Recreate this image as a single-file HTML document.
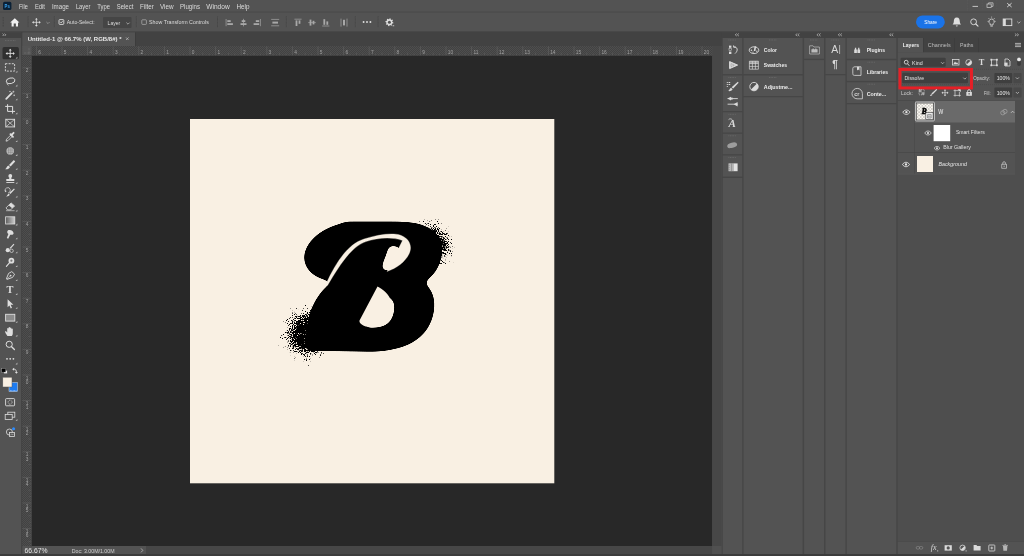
<!DOCTYPE html>
<html lang="en"><head><meta charset="utf-8"><title>Photoshop - Dissolve blend mode</title>
<style>
html,body{margin:0;padding:0;background:#535353;overflow:hidden}
svg{display:block;font-family:"Liberation Sans",sans-serif}
</style></head><body>
<svg width="1024" height="556" viewBox="0 0 1024 556">
<rect x="0" y="0" width="1024" height="556" fill="#535353" />
<rect x="0" y="11.6" width="1024" height="1.0" fill="#494949" />
<rect x="0" y="31.6" width="1024" height="0.6" fill="#3a3a3a" />
<rect x="22" y="32" width="700" height="14" fill="#424242" />
<rect x="22" y="32.4" width="113" height="13.6" fill="#535353" />
<rect x="135" y="32.4" width="0.6" height="13.6" fill="#3a3a3a" />
<rect x="22" y="46" width="690" height="9.8" fill="#484848" />
<rect x="22" y="46" width="9.6" height="500" fill="#484848" />
<rect x="32" y="55.8" width="680.3" height="490.2" fill="#282828" />
<rect x="712.3" y="46" width="9.3" height="500" fill="#474747" />
<rect x="22" y="546" width="124" height="8" fill="#535353" />
<rect x="146" y="546" width="566.3" height="8" fill="#474747" />
<rect x="712.3" y="546" width="9.3" height="8" fill="#505050" />
<rect x="0" y="554" width="1024" height="2" fill="#3c3c3c" />
<rect x="21.4" y="32" width="0.8" height="522" fill="#3a3a3a" />
<rect x="190" y="119" width="364.3" height="364.3" fill="#f9f0e3" />
<defs>
<filter id="goo" x="-20%" y="-20%" width="140%" height="140%" color-interpolation-filters="sRGB">
<feGaussianBlur in="SourceGraphic" stdDeviation="3.2" result="b"/>
<feColorMatrix in="b" type="matrix" values="0 0 0 0 0  0 0 0 0 0  0 0 0 0 0  0 0 0 14 -7"/>
</filter>
<filter id="dis" x="-40%" y="-40%" width="180%" height="180%" color-interpolation-filters="sRGB">
<feGaussianBlur in="SourceAlpha" stdDeviation="9" result="b"/>
<feTurbulence type="fractalNoise" baseFrequency="0.93" numOctaves="1" seed="7" result="n"/>
<feColorMatrix in="n" type="matrix" values="0 0 0 0 0  0 0 0 0 0  0 0 0 0 0  1 0 0 0 0" result="na"/>
<feComposite in="b" in2="na" operator="arithmetic" k1="0" k2="1.5" k3="-2.6" k4="0.45" result="d"/>
<feColorMatrix in="d" type="matrix" values="0 0 0 0 0  0 0 0 0 0  0 0 0 0 0  0 0 0 5 0" result="e"/><feColorMatrix in="b" type="matrix" values="0 0 0 0 0  0 0 0 0 0  0 0 0 0 0  0 0 0 60 -1.5" result="m"/><feComposite in="e" in2="m" operator="in"/>
</filter>
</defs>
<g filter="url(#dis)">
<ellipse cx="308" cy="334" rx="23" ry="24" transform="rotate(35 308 334)" fill="#000"/>
<ellipse cx="435" cy="243" rx="15" ry="22" transform="rotate(-28 435 243)" fill="#000"/>
</g>
<g id="art" filter="url(#goo)">
<g transform="translate(313,344.3) skewX(-7) scale(1.0,1)">
<text x="0" y="0" font-family="'Liberation Serif',serif" font-weight="700" font-style="italic" font-size="176" fill="#000" stroke="#000" stroke-width="15" stroke-linejoin="round">B</text>
</g>
<ellipse cx="346" cy="252" rx="43" ry="29" transform="rotate(-14 346 252)" fill="#000"/>
<ellipse cx="326" cy="312" rx="15" ry="33" transform="rotate(25 326 312)" fill="#000"/>
</g>
<path d="M 326 284 C 336 262, 348 244, 364 239 C 378 234.5, 392 232.5, 400 235 C 409 238, 413 246, 409 254 C 405 262, 397 268, 387 271.5 L 402.5 240.5 C 392 236.8, 378 237.6, 366 241.6 C 351 247, 340 264.5, 327.5 285.5 Z" fill="#f9f0e3" stroke="#f9f0e3" stroke-width="0.3"/>
<path d="M 377.5 286.5 L 359.5 320.5 C 358.5 324, 366 328.5, 375 326.5 C 386 324, 393 310, 391 301 C 389.5 294, 382 289, 377.5 286.5 Z" fill="#f9f0e3"/>

<pattern id="rck" width="2" height="2" patternUnits="userSpaceOnUse"><rect width="2" height="2" fill="#424242"/><rect width="1" height="1" fill="#4e4e4e"/><rect x="1" y="1" width="1" height="1" fill="#4e4e4e"/></pattern><rect x="22.2" y="46" width="690" height="9.8" fill="url(#rck)"/><rect x="22.2" y="46" width="9.4" height="500" fill="url(#rck)"/><g stroke="#686868" stroke-width="0.5"><line x1="36.40" y1="46.4" x2="36.40" y2="55.8"/><line x1="62.00" y1="46.4" x2="62.00" y2="55.8"/><line x1="87.60" y1="46.4" x2="87.60" y2="55.8"/><line x1="113.20" y1="46.4" x2="113.20" y2="55.8"/><line x1="138.80" y1="46.4" x2="138.80" y2="55.8"/><line x1="164.40" y1="46.4" x2="164.40" y2="55.8"/><line x1="190.00" y1="46.4" x2="190.00" y2="55.8"/><line x1="215.60" y1="46.4" x2="215.60" y2="55.8"/><line x1="241.20" y1="46.4" x2="241.20" y2="55.8"/><line x1="266.80" y1="46.4" x2="266.80" y2="55.8"/><line x1="292.40" y1="46.4" x2="292.40" y2="55.8"/><line x1="318.00" y1="46.4" x2="318.00" y2="55.8"/><line x1="343.60" y1="46.4" x2="343.60" y2="55.8"/><line x1="369.20" y1="46.4" x2="369.20" y2="55.8"/><line x1="394.80" y1="46.4" x2="394.80" y2="55.8"/><line x1="420.40" y1="46.4" x2="420.40" y2="55.8"/><line x1="446.00" y1="46.4" x2="446.00" y2="55.8"/><line x1="471.60" y1="46.4" x2="471.60" y2="55.8"/><line x1="497.20" y1="46.4" x2="497.20" y2="55.8"/><line x1="522.80" y1="46.4" x2="522.80" y2="55.8"/><line x1="548.40" y1="46.4" x2="548.40" y2="55.8"/><line x1="574.00" y1="46.4" x2="574.00" y2="55.8"/><line x1="599.60" y1="46.4" x2="599.60" y2="55.8"/><line x1="625.20" y1="46.4" x2="625.20" y2="55.8"/><line x1="650.80" y1="46.4" x2="650.80" y2="55.8"/><line x1="676.40" y1="46.4" x2="676.40" y2="55.8"/><line x1="702.00" y1="46.4" x2="702.00" y2="55.8"/></g><g stroke="#666" stroke-width="0.45"><line x1="33.20" y1="54.5" x2="33.20" y2="55.8"/><line x1="39.60" y1="54.5" x2="39.60" y2="55.8"/><line x1="42.80" y1="53.599999999999994" x2="42.80" y2="55.8"/><line x1="46.00" y1="54.5" x2="46.00" y2="55.8"/><line x1="49.20" y1="52.599999999999994" x2="49.20" y2="55.8"/><line x1="52.40" y1="54.5" x2="52.40" y2="55.8"/><line x1="55.60" y1="53.599999999999994" x2="55.60" y2="55.8"/><line x1="58.80" y1="54.5" x2="58.80" y2="55.8"/><line x1="65.20" y1="54.5" x2="65.20" y2="55.8"/><line x1="68.40" y1="53.599999999999994" x2="68.40" y2="55.8"/><line x1="71.60" y1="54.5" x2="71.60" y2="55.8"/><line x1="74.80" y1="52.599999999999994" x2="74.80" y2="55.8"/><line x1="78.00" y1="54.5" x2="78.00" y2="55.8"/><line x1="81.20" y1="53.599999999999994" x2="81.20" y2="55.8"/><line x1="84.40" y1="54.5" x2="84.40" y2="55.8"/><line x1="90.80" y1="54.5" x2="90.80" y2="55.8"/><line x1="94.00" y1="53.599999999999994" x2="94.00" y2="55.8"/><line x1="97.20" y1="54.5" x2="97.20" y2="55.8"/><line x1="100.40" y1="52.599999999999994" x2="100.40" y2="55.8"/><line x1="103.60" y1="54.5" x2="103.60" y2="55.8"/><line x1="106.80" y1="53.599999999999994" x2="106.80" y2="55.8"/><line x1="110.00" y1="54.5" x2="110.00" y2="55.8"/><line x1="116.40" y1="54.5" x2="116.40" y2="55.8"/><line x1="119.60" y1="53.599999999999994" x2="119.60" y2="55.8"/><line x1="122.80" y1="54.5" x2="122.80" y2="55.8"/><line x1="126.00" y1="52.599999999999994" x2="126.00" y2="55.8"/><line x1="129.20" y1="54.5" x2="129.20" y2="55.8"/><line x1="132.40" y1="53.599999999999994" x2="132.40" y2="55.8"/><line x1="135.60" y1="54.5" x2="135.60" y2="55.8"/><line x1="142.00" y1="54.5" x2="142.00" y2="55.8"/><line x1="145.20" y1="53.599999999999994" x2="145.20" y2="55.8"/><line x1="148.40" y1="54.5" x2="148.40" y2="55.8"/><line x1="151.60" y1="52.599999999999994" x2="151.60" y2="55.8"/><line x1="154.80" y1="54.5" x2="154.80" y2="55.8"/><line x1="158.00" y1="53.599999999999994" x2="158.00" y2="55.8"/><line x1="161.20" y1="54.5" x2="161.20" y2="55.8"/><line x1="167.60" y1="54.5" x2="167.60" y2="55.8"/><line x1="170.80" y1="53.599999999999994" x2="170.80" y2="55.8"/><line x1="174.00" y1="54.5" x2="174.00" y2="55.8"/><line x1="177.20" y1="52.599999999999994" x2="177.20" y2="55.8"/><line x1="180.40" y1="54.5" x2="180.40" y2="55.8"/><line x1="183.60" y1="53.599999999999994" x2="183.60" y2="55.8"/><line x1="186.80" y1="54.5" x2="186.80" y2="55.8"/><line x1="193.20" y1="54.5" x2="193.20" y2="55.8"/><line x1="196.40" y1="53.599999999999994" x2="196.40" y2="55.8"/><line x1="199.60" y1="54.5" x2="199.60" y2="55.8"/><line x1="202.80" y1="52.599999999999994" x2="202.80" y2="55.8"/><line x1="206.00" y1="54.5" x2="206.00" y2="55.8"/><line x1="209.20" y1="53.599999999999994" x2="209.20" y2="55.8"/><line x1="212.40" y1="54.5" x2="212.40" y2="55.8"/><line x1="218.80" y1="54.5" x2="218.80" y2="55.8"/><line x1="222.00" y1="53.599999999999994" x2="222.00" y2="55.8"/><line x1="225.20" y1="54.5" x2="225.20" y2="55.8"/><line x1="228.40" y1="52.599999999999994" x2="228.40" y2="55.8"/><line x1="231.60" y1="54.5" x2="231.60" y2="55.8"/><line x1="234.80" y1="53.599999999999994" x2="234.80" y2="55.8"/><line x1="238.00" y1="54.5" x2="238.00" y2="55.8"/><line x1="244.40" y1="54.5" x2="244.40" y2="55.8"/><line x1="247.60" y1="53.599999999999994" x2="247.60" y2="55.8"/><line x1="250.80" y1="54.5" x2="250.80" y2="55.8"/><line x1="254.00" y1="52.599999999999994" x2="254.00" y2="55.8"/><line x1="257.20" y1="54.5" x2="257.20" y2="55.8"/><line x1="260.40" y1="53.599999999999994" x2="260.40" y2="55.8"/><line x1="263.60" y1="54.5" x2="263.60" y2="55.8"/><line x1="270.00" y1="54.5" x2="270.00" y2="55.8"/><line x1="273.20" y1="53.599999999999994" x2="273.20" y2="55.8"/><line x1="276.40" y1="54.5" x2="276.40" y2="55.8"/><line x1="279.60" y1="52.599999999999994" x2="279.60" y2="55.8"/><line x1="282.80" y1="54.5" x2="282.80" y2="55.8"/><line x1="286.00" y1="53.599999999999994" x2="286.00" y2="55.8"/><line x1="289.20" y1="54.5" x2="289.20" y2="55.8"/><line x1="295.60" y1="54.5" x2="295.60" y2="55.8"/><line x1="298.80" y1="53.599999999999994" x2="298.80" y2="55.8"/><line x1="302.00" y1="54.5" x2="302.00" y2="55.8"/><line x1="305.20" y1="52.599999999999994" x2="305.20" y2="55.8"/><line x1="308.40" y1="54.5" x2="308.40" y2="55.8"/><line x1="311.60" y1="53.599999999999994" x2="311.60" y2="55.8"/><line x1="314.80" y1="54.5" x2="314.80" y2="55.8"/><line x1="321.20" y1="54.5" x2="321.20" y2="55.8"/><line x1="324.40" y1="53.599999999999994" x2="324.40" y2="55.8"/><line x1="327.60" y1="54.5" x2="327.60" y2="55.8"/><line x1="330.80" y1="52.599999999999994" x2="330.80" y2="55.8"/><line x1="334.00" y1="54.5" x2="334.00" y2="55.8"/><line x1="337.20" y1="53.599999999999994" x2="337.20" y2="55.8"/><line x1="340.40" y1="54.5" x2="340.40" y2="55.8"/><line x1="346.80" y1="54.5" x2="346.80" y2="55.8"/><line x1="350.00" y1="53.599999999999994" x2="350.00" y2="55.8"/><line x1="353.20" y1="54.5" x2="353.20" y2="55.8"/><line x1="356.40" y1="52.599999999999994" x2="356.40" y2="55.8"/><line x1="359.60" y1="54.5" x2="359.60" y2="55.8"/><line x1="362.80" y1="53.599999999999994" x2="362.80" y2="55.8"/><line x1="366.00" y1="54.5" x2="366.00" y2="55.8"/><line x1="372.40" y1="54.5" x2="372.40" y2="55.8"/><line x1="375.60" y1="53.599999999999994" x2="375.60" y2="55.8"/><line x1="378.80" y1="54.5" x2="378.80" y2="55.8"/><line x1="382.00" y1="52.599999999999994" x2="382.00" y2="55.8"/><line x1="385.20" y1="54.5" x2="385.20" y2="55.8"/><line x1="388.40" y1="53.599999999999994" x2="388.40" y2="55.8"/><line x1="391.60" y1="54.5" x2="391.60" y2="55.8"/><line x1="398.00" y1="54.5" x2="398.00" y2="55.8"/><line x1="401.20" y1="53.599999999999994" x2="401.20" y2="55.8"/><line x1="404.40" y1="54.5" x2="404.40" y2="55.8"/><line x1="407.60" y1="52.599999999999994" x2="407.60" y2="55.8"/><line x1="410.80" y1="54.5" x2="410.80" y2="55.8"/><line x1="414.00" y1="53.599999999999994" x2="414.00" y2="55.8"/><line x1="417.20" y1="54.5" x2="417.20" y2="55.8"/><line x1="423.60" y1="54.5" x2="423.60" y2="55.8"/><line x1="426.80" y1="53.599999999999994" x2="426.80" y2="55.8"/><line x1="430.00" y1="54.5" x2="430.00" y2="55.8"/><line x1="433.20" y1="52.599999999999994" x2="433.20" y2="55.8"/><line x1="436.40" y1="54.5" x2="436.40" y2="55.8"/><line x1="439.60" y1="53.599999999999994" x2="439.60" y2="55.8"/><line x1="442.80" y1="54.5" x2="442.80" y2="55.8"/><line x1="449.20" y1="54.5" x2="449.20" y2="55.8"/><line x1="452.40" y1="53.599999999999994" x2="452.40" y2="55.8"/><line x1="455.60" y1="54.5" x2="455.60" y2="55.8"/><line x1="458.80" y1="52.599999999999994" x2="458.80" y2="55.8"/><line x1="462.00" y1="54.5" x2="462.00" y2="55.8"/><line x1="465.20" y1="53.599999999999994" x2="465.20" y2="55.8"/><line x1="468.40" y1="54.5" x2="468.40" y2="55.8"/><line x1="474.80" y1="54.5" x2="474.80" y2="55.8"/><line x1="478.00" y1="53.599999999999994" x2="478.00" y2="55.8"/><line x1="481.20" y1="54.5" x2="481.20" y2="55.8"/><line x1="484.40" y1="52.599999999999994" x2="484.40" y2="55.8"/><line x1="487.60" y1="54.5" x2="487.60" y2="55.8"/><line x1="490.80" y1="53.599999999999994" x2="490.80" y2="55.8"/><line x1="494.00" y1="54.5" x2="494.00" y2="55.8"/><line x1="500.40" y1="54.5" x2="500.40" y2="55.8"/><line x1="503.60" y1="53.599999999999994" x2="503.60" y2="55.8"/><line x1="506.80" y1="54.5" x2="506.80" y2="55.8"/><line x1="510.00" y1="52.599999999999994" x2="510.00" y2="55.8"/><line x1="513.20" y1="54.5" x2="513.20" y2="55.8"/><line x1="516.40" y1="53.599999999999994" x2="516.40" y2="55.8"/><line x1="519.60" y1="54.5" x2="519.60" y2="55.8"/><line x1="526.00" y1="54.5" x2="526.00" y2="55.8"/><line x1="529.20" y1="53.599999999999994" x2="529.20" y2="55.8"/><line x1="532.40" y1="54.5" x2="532.40" y2="55.8"/><line x1="535.60" y1="52.599999999999994" x2="535.60" y2="55.8"/><line x1="538.80" y1="54.5" x2="538.80" y2="55.8"/><line x1="542.00" y1="53.599999999999994" x2="542.00" y2="55.8"/><line x1="545.20" y1="54.5" x2="545.20" y2="55.8"/><line x1="551.60" y1="54.5" x2="551.60" y2="55.8"/><line x1="554.80" y1="53.599999999999994" x2="554.80" y2="55.8"/><line x1="558.00" y1="54.5" x2="558.00" y2="55.8"/><line x1="561.20" y1="52.599999999999994" x2="561.20" y2="55.8"/><line x1="564.40" y1="54.5" x2="564.40" y2="55.8"/><line x1="567.60" y1="53.599999999999994" x2="567.60" y2="55.8"/><line x1="570.80" y1="54.5" x2="570.80" y2="55.8"/><line x1="577.20" y1="54.5" x2="577.20" y2="55.8"/><line x1="580.40" y1="53.599999999999994" x2="580.40" y2="55.8"/><line x1="583.60" y1="54.5" x2="583.60" y2="55.8"/><line x1="586.80" y1="52.599999999999994" x2="586.80" y2="55.8"/><line x1="590.00" y1="54.5" x2="590.00" y2="55.8"/><line x1="593.20" y1="53.599999999999994" x2="593.20" y2="55.8"/><line x1="596.40" y1="54.5" x2="596.40" y2="55.8"/><line x1="602.80" y1="54.5" x2="602.80" y2="55.8"/><line x1="606.00" y1="53.599999999999994" x2="606.00" y2="55.8"/><line x1="609.20" y1="54.5" x2="609.20" y2="55.8"/><line x1="612.40" y1="52.599999999999994" x2="612.40" y2="55.8"/><line x1="615.60" y1="54.5" x2="615.60" y2="55.8"/><line x1="618.80" y1="53.599999999999994" x2="618.80" y2="55.8"/><line x1="622.00" y1="54.5" x2="622.00" y2="55.8"/><line x1="628.40" y1="54.5" x2="628.40" y2="55.8"/><line x1="631.60" y1="53.599999999999994" x2="631.60" y2="55.8"/><line x1="634.80" y1="54.5" x2="634.80" y2="55.8"/><line x1="638.00" y1="52.599999999999994" x2="638.00" y2="55.8"/><line x1="641.20" y1="54.5" x2="641.20" y2="55.8"/><line x1="644.40" y1="53.599999999999994" x2="644.40" y2="55.8"/><line x1="647.60" y1="54.5" x2="647.60" y2="55.8"/><line x1="654.00" y1="54.5" x2="654.00" y2="55.8"/><line x1="657.20" y1="53.599999999999994" x2="657.20" y2="55.8"/><line x1="660.40" y1="54.5" x2="660.40" y2="55.8"/><line x1="663.60" y1="52.599999999999994" x2="663.60" y2="55.8"/><line x1="666.80" y1="54.5" x2="666.80" y2="55.8"/><line x1="670.00" y1="53.599999999999994" x2="670.00" y2="55.8"/><line x1="673.20" y1="54.5" x2="673.20" y2="55.8"/><line x1="679.60" y1="54.5" x2="679.60" y2="55.8"/><line x1="682.80" y1="53.599999999999994" x2="682.80" y2="55.8"/><line x1="686.00" y1="54.5" x2="686.00" y2="55.8"/><line x1="689.20" y1="52.599999999999994" x2="689.20" y2="55.8"/><line x1="692.40" y1="54.5" x2="692.40" y2="55.8"/><line x1="695.60" y1="53.599999999999994" x2="695.60" y2="55.8"/><line x1="698.80" y1="54.5" x2="698.80" y2="55.8"/><line x1="705.20" y1="54.5" x2="705.20" y2="55.8"/><line x1="708.40" y1="53.599999999999994" x2="708.40" y2="55.8"/><line x1="711.60" y1="54.5" x2="711.60" y2="55.8"/></g><g stroke="#686868" stroke-width="0.5"><line x1="22.4" y1="67.80" x2="31.6" y2="67.80"/><line x1="22.4" y1="93.40" x2="31.6" y2="93.40"/><line x1="22.4" y1="119.00" x2="31.6" y2="119.00"/><line x1="22.4" y1="144.60" x2="31.6" y2="144.60"/><line x1="22.4" y1="170.20" x2="31.6" y2="170.20"/><line x1="22.4" y1="195.80" x2="31.6" y2="195.80"/><line x1="22.4" y1="221.40" x2="31.6" y2="221.40"/><line x1="22.4" y1="247.00" x2="31.6" y2="247.00"/><line x1="22.4" y1="272.60" x2="31.6" y2="272.60"/><line x1="22.4" y1="298.20" x2="31.6" y2="298.20"/><line x1="22.4" y1="323.80" x2="31.6" y2="323.80"/><line x1="22.4" y1="349.40" x2="31.6" y2="349.40"/><line x1="22.4" y1="375.00" x2="31.6" y2="375.00"/><line x1="22.4" y1="400.60" x2="31.6" y2="400.60"/><line x1="22.4" y1="426.20" x2="31.6" y2="426.20"/><line x1="22.4" y1="451.80" x2="31.6" y2="451.80"/><line x1="22.4" y1="477.40" x2="31.6" y2="477.40"/><line x1="22.4" y1="503.00" x2="31.6" y2="503.00"/><line x1="22.4" y1="528.60" x2="31.6" y2="528.60"/></g><g stroke="#666" stroke-width="0.45"><line x1="30.3" y1="58.20" x2="31.6" y2="58.20"/><line x1="29.400000000000002" y1="61.40" x2="31.6" y2="61.40"/><line x1="30.3" y1="64.60" x2="31.6" y2="64.60"/><line x1="30.3" y1="71.00" x2="31.6" y2="71.00"/><line x1="29.400000000000002" y1="74.20" x2="31.6" y2="74.20"/><line x1="30.3" y1="77.40" x2="31.6" y2="77.40"/><line x1="28.400000000000002" y1="80.60" x2="31.6" y2="80.60"/><line x1="30.3" y1="83.80" x2="31.6" y2="83.80"/><line x1="29.400000000000002" y1="87.00" x2="31.6" y2="87.00"/><line x1="30.3" y1="90.20" x2="31.6" y2="90.20"/><line x1="30.3" y1="96.60" x2="31.6" y2="96.60"/><line x1="29.400000000000002" y1="99.80" x2="31.6" y2="99.80"/><line x1="30.3" y1="103.00" x2="31.6" y2="103.00"/><line x1="28.400000000000002" y1="106.20" x2="31.6" y2="106.20"/><line x1="30.3" y1="109.40" x2="31.6" y2="109.40"/><line x1="29.400000000000002" y1="112.60" x2="31.6" y2="112.60"/><line x1="30.3" y1="115.80" x2="31.6" y2="115.80"/><line x1="30.3" y1="122.20" x2="31.6" y2="122.20"/><line x1="29.400000000000002" y1="125.40" x2="31.6" y2="125.40"/><line x1="30.3" y1="128.60" x2="31.6" y2="128.60"/><line x1="28.400000000000002" y1="131.80" x2="31.6" y2="131.80"/><line x1="30.3" y1="135.00" x2="31.6" y2="135.00"/><line x1="29.400000000000002" y1="138.20" x2="31.6" y2="138.20"/><line x1="30.3" y1="141.40" x2="31.6" y2="141.40"/><line x1="30.3" y1="147.80" x2="31.6" y2="147.80"/><line x1="29.400000000000002" y1="151.00" x2="31.6" y2="151.00"/><line x1="30.3" y1="154.20" x2="31.6" y2="154.20"/><line x1="28.400000000000002" y1="157.40" x2="31.6" y2="157.40"/><line x1="30.3" y1="160.60" x2="31.6" y2="160.60"/><line x1="29.400000000000002" y1="163.80" x2="31.6" y2="163.80"/><line x1="30.3" y1="167.00" x2="31.6" y2="167.00"/><line x1="30.3" y1="173.40" x2="31.6" y2="173.40"/><line x1="29.400000000000002" y1="176.60" x2="31.6" y2="176.60"/><line x1="30.3" y1="179.80" x2="31.6" y2="179.80"/><line x1="28.400000000000002" y1="183.00" x2="31.6" y2="183.00"/><line x1="30.3" y1="186.20" x2="31.6" y2="186.20"/><line x1="29.400000000000002" y1="189.40" x2="31.6" y2="189.40"/><line x1="30.3" y1="192.60" x2="31.6" y2="192.60"/><line x1="30.3" y1="199.00" x2="31.6" y2="199.00"/><line x1="29.400000000000002" y1="202.20" x2="31.6" y2="202.20"/><line x1="30.3" y1="205.40" x2="31.6" y2="205.40"/><line x1="28.400000000000002" y1="208.60" x2="31.6" y2="208.60"/><line x1="30.3" y1="211.80" x2="31.6" y2="211.80"/><line x1="29.400000000000002" y1="215.00" x2="31.6" y2="215.00"/><line x1="30.3" y1="218.20" x2="31.6" y2="218.20"/><line x1="30.3" y1="224.60" x2="31.6" y2="224.60"/><line x1="29.400000000000002" y1="227.80" x2="31.6" y2="227.80"/><line x1="30.3" y1="231.00" x2="31.6" y2="231.00"/><line x1="28.400000000000002" y1="234.20" x2="31.6" y2="234.20"/><line x1="30.3" y1="237.40" x2="31.6" y2="237.40"/><line x1="29.400000000000002" y1="240.60" x2="31.6" y2="240.60"/><line x1="30.3" y1="243.80" x2="31.6" y2="243.80"/><line x1="30.3" y1="250.20" x2="31.6" y2="250.20"/><line x1="29.400000000000002" y1="253.40" x2="31.6" y2="253.40"/><line x1="30.3" y1="256.60" x2="31.6" y2="256.60"/><line x1="28.400000000000002" y1="259.80" x2="31.6" y2="259.80"/><line x1="30.3" y1="263.00" x2="31.6" y2="263.00"/><line x1="29.400000000000002" y1="266.20" x2="31.6" y2="266.20"/><line x1="30.3" y1="269.40" x2="31.6" y2="269.40"/><line x1="30.3" y1="275.80" x2="31.6" y2="275.80"/><line x1="29.400000000000002" y1="279.00" x2="31.6" y2="279.00"/><line x1="30.3" y1="282.20" x2="31.6" y2="282.20"/><line x1="28.400000000000002" y1="285.40" x2="31.6" y2="285.40"/><line x1="30.3" y1="288.60" x2="31.6" y2="288.60"/><line x1="29.400000000000002" y1="291.80" x2="31.6" y2="291.80"/><line x1="30.3" y1="295.00" x2="31.6" y2="295.00"/><line x1="30.3" y1="301.40" x2="31.6" y2="301.40"/><line x1="29.400000000000002" y1="304.60" x2="31.6" y2="304.60"/><line x1="30.3" y1="307.80" x2="31.6" y2="307.80"/><line x1="28.400000000000002" y1="311.00" x2="31.6" y2="311.00"/><line x1="30.3" y1="314.20" x2="31.6" y2="314.20"/><line x1="29.400000000000002" y1="317.40" x2="31.6" y2="317.40"/><line x1="30.3" y1="320.60" x2="31.6" y2="320.60"/><line x1="30.3" y1="327.00" x2="31.6" y2="327.00"/><line x1="29.400000000000002" y1="330.20" x2="31.6" y2="330.20"/><line x1="30.3" y1="333.40" x2="31.6" y2="333.40"/><line x1="28.400000000000002" y1="336.60" x2="31.6" y2="336.60"/><line x1="30.3" y1="339.80" x2="31.6" y2="339.80"/><line x1="29.400000000000002" y1="343.00" x2="31.6" y2="343.00"/><line x1="30.3" y1="346.20" x2="31.6" y2="346.20"/><line x1="30.3" y1="352.60" x2="31.6" y2="352.60"/><line x1="29.400000000000002" y1="355.80" x2="31.6" y2="355.80"/><line x1="30.3" y1="359.00" x2="31.6" y2="359.00"/><line x1="28.400000000000002" y1="362.20" x2="31.6" y2="362.20"/><line x1="30.3" y1="365.40" x2="31.6" y2="365.40"/><line x1="29.400000000000002" y1="368.60" x2="31.6" y2="368.60"/><line x1="30.3" y1="371.80" x2="31.6" y2="371.80"/><line x1="30.3" y1="378.20" x2="31.6" y2="378.20"/><line x1="29.400000000000002" y1="381.40" x2="31.6" y2="381.40"/><line x1="30.3" y1="384.60" x2="31.6" y2="384.60"/><line x1="28.400000000000002" y1="387.80" x2="31.6" y2="387.80"/><line x1="30.3" y1="391.00" x2="31.6" y2="391.00"/><line x1="29.400000000000002" y1="394.20" x2="31.6" y2="394.20"/><line x1="30.3" y1="397.40" x2="31.6" y2="397.40"/><line x1="30.3" y1="403.80" x2="31.6" y2="403.80"/><line x1="29.400000000000002" y1="407.00" x2="31.6" y2="407.00"/><line x1="30.3" y1="410.20" x2="31.6" y2="410.20"/><line x1="28.400000000000002" y1="413.40" x2="31.6" y2="413.40"/><line x1="30.3" y1="416.60" x2="31.6" y2="416.60"/><line x1="29.400000000000002" y1="419.80" x2="31.6" y2="419.80"/><line x1="30.3" y1="423.00" x2="31.6" y2="423.00"/><line x1="30.3" y1="429.40" x2="31.6" y2="429.40"/><line x1="29.400000000000002" y1="432.60" x2="31.6" y2="432.60"/><line x1="30.3" y1="435.80" x2="31.6" y2="435.80"/><line x1="28.400000000000002" y1="439.00" x2="31.6" y2="439.00"/><line x1="30.3" y1="442.20" x2="31.6" y2="442.20"/><line x1="29.400000000000002" y1="445.40" x2="31.6" y2="445.40"/><line x1="30.3" y1="448.60" x2="31.6" y2="448.60"/><line x1="30.3" y1="455.00" x2="31.6" y2="455.00"/><line x1="29.400000000000002" y1="458.20" x2="31.6" y2="458.20"/><line x1="30.3" y1="461.40" x2="31.6" y2="461.40"/><line x1="28.400000000000002" y1="464.60" x2="31.6" y2="464.60"/><line x1="30.3" y1="467.80" x2="31.6" y2="467.80"/><line x1="29.400000000000002" y1="471.00" x2="31.6" y2="471.00"/><line x1="30.3" y1="474.20" x2="31.6" y2="474.20"/><line x1="30.3" y1="480.60" x2="31.6" y2="480.60"/><line x1="29.400000000000002" y1="483.80" x2="31.6" y2="483.80"/><line x1="30.3" y1="487.00" x2="31.6" y2="487.00"/><line x1="28.400000000000002" y1="490.20" x2="31.6" y2="490.20"/><line x1="30.3" y1="493.40" x2="31.6" y2="493.40"/><line x1="29.400000000000002" y1="496.60" x2="31.6" y2="496.60"/><line x1="30.3" y1="499.80" x2="31.6" y2="499.80"/><line x1="30.3" y1="506.20" x2="31.6" y2="506.20"/><line x1="29.400000000000002" y1="509.40" x2="31.6" y2="509.40"/><line x1="30.3" y1="512.60" x2="31.6" y2="512.60"/><line x1="28.400000000000002" y1="515.80" x2="31.6" y2="515.80"/><line x1="30.3" y1="519.00" x2="31.6" y2="519.00"/><line x1="29.400000000000002" y1="522.20" x2="31.6" y2="522.20"/><line x1="30.3" y1="525.40" x2="31.6" y2="525.40"/><line x1="30.3" y1="531.80" x2="31.6" y2="531.80"/><line x1="29.400000000000002" y1="535.00" x2="31.6" y2="535.00"/><line x1="30.3" y1="538.20" x2="31.6" y2="538.20"/><line x1="28.400000000000002" y1="541.40" x2="31.6" y2="541.40"/><line x1="30.3" y1="544.60" x2="31.6" y2="544.60"/></g><g font-size="4.8" fill="#a0a0a0"><text x="38.20" y="53.6">6</text><text x="63.80" y="53.6">5</text><text x="89.40" y="53.6">4</text><text x="115.00" y="53.6">3</text><text x="140.60" y="53.6">2</text><text x="166.20" y="53.6">1</text><text x="191.80" y="53.6">0</text><text x="217.40" y="53.6">1</text><text x="243.00" y="53.6">2</text><text x="268.60" y="53.6">3</text><text x="294.20" y="53.6">4</text><text x="319.80" y="53.6">5</text><text x="345.40" y="53.6">6</text><text x="371.00" y="53.6">7</text><text x="396.60" y="53.6">8</text><text x="422.20" y="53.6">9</text><text x="447.80" y="53.6">10</text><text x="473.40" y="53.6">11</text><text x="499.00" y="53.6">12</text><text x="524.60" y="53.6">13</text><text x="550.20" y="53.6">14</text><text x="575.80" y="53.6">15</text><text x="601.40" y="53.6">16</text><text x="627.00" y="53.6">17</text><text x="652.60" y="53.6">18</text><text x="678.20" y="53.6">19</text><text x="703.80" y="53.6">20</text><text x="25.8" y="72.40">2</text><text x="25.8" y="98.00">1</text><text x="25.8" y="123.60">0</text><text x="25.8" y="149.20">1</text><text x="25.8" y="174.80">2</text><text x="25.8" y="200.40">3</text><text x="25.8" y="226.00">4</text><text x="25.8" y="251.60">5</text><text x="25.8" y="277.20">6</text><text x="25.8" y="302.80">7</text><text x="25.8" y="328.40">8</text><text x="25.8" y="354.00">9</text><text x="25.8" y="379.60">1</text><text x="25.8" y="383.80">0</text><text x="25.8" y="405.20">1</text><text x="25.8" y="409.40">1</text><text x="25.8" y="430.80">1</text><text x="25.8" y="435.00">2</text><text x="25.8" y="456.40">1</text><text x="25.8" y="460.60">3</text><text x="25.8" y="482.00">1</text><text x="25.8" y="486.20">4</text><text x="25.8" y="507.60">1</text><text x="25.8" y="511.80">5</text><text x="25.8" y="533.20">1</text><text x="25.8" y="537.40">6</text></g><rect x="22.2" y="46" width="9.4" height="9.8" fill="#555"/><path d="M 24 53 H 31 M 29 48 V 55" stroke="#8a8a8a" stroke-width="0.5" stroke-dasharray="0.7 0.7"/><rect x="22" y="55.2" width="690.3" height="0.5" fill="#3a3a3a"/><rect x="31.4" y="55.8" width="0.5" height="490.6" fill="#3a3a3a"/>
<rect x="0" y="32.2" width="21.4" height="5.8" fill="#424242" />
<path d="M 2.6 33.6 L 3.8 34.8 L 2.6 36 M 4.6 33.6 L 5.8 34.8 L 4.6 36" fill="none" stroke="#c4c4c4" stroke-width="0.7"/>
<line x1="5" y1="40.6" x2="16" y2="40.6" stroke="#6c6c6c" stroke-width="1" stroke-dasharray="0.8 0.8"/>
<rect x="2.5" y="47.1" width="16.4" height="12.2" rx="1.6" fill="#303030"/>
<path d="M 10.2 49.8 V 57.0 M 6.6 53.4 H 13.8" stroke="#dedede" stroke-width="0.9"/><path d="M 10.2 48.8 l 1.5 1.8 h -3 Z M 10.2 58.0 l 1.5 -1.8 h -3 Z M 5.6 53.4 l 1.8 -1.5 v 3 Z M 14.8 53.4 l -1.8 -1.5 v 3 Z" fill="#dedede"/>
<path d="M 17.4 56.800000000000004 V 58.6 H 15.6 Z" fill="#c0c0c0"/>
<rect x="5.4" y="63.7" width="9.2" height="7.4" fill="none" stroke="#dedede" stroke-width="0.9" stroke-dasharray="2 1.2"/>
<path d="M 17.4 70.7 V 72.5 H 15.6 Z" fill="#c0c0c0"/>
<ellipse cx="10.6" cy="80.80000000000001" rx="4.4" ry="2.8" transform="rotate(-14 10.6 80.80000000000001)" fill="none" stroke="#dedede" stroke-width="0.9"/><path d="M 7.4 82.80000000000001 C 6.6 83.80000000000001, 7.8 84.80000000000001, 8.4 85.4" fill="none" stroke="#dedede" stroke-width="0.8"/>
<path d="M 17.4 84.60000000000001 V 86.4 H 15.6 Z" fill="#c0c0c0"/>
<path d="M 6.2 98.9 L 11.8 93.10000000000001" stroke="#dedede" stroke-width="1.7" stroke-linecap="round"/><path d="M 13.4 90.70000000000002 V 92.70000000000002 M 12.4 91.70000000000002 H 14.4 M 14.2 94.50000000000001 V 96.10000000000001 M 13.4 95.30000000000001 H 15 M 10 90.9 V 92.10000000000001 M 9.4 91.50000000000001 H 10.6" stroke="#dedede" stroke-width="0.6"/>
<path d="M 17.4 98.50000000000001 V 100.30000000000001 H 15.6 Z" fill="#c0c0c0"/>
<path d="M 7.6 104.2 V 111.39999999999999 H 15 M 5.2 106.39999999999999 H 12.6 V 113.6" fill="none" stroke="#dedede" stroke-width="1"/>
<path d="M 17.4 112.4 V 114.2 H 15.6 Z" fill="#c0c0c0"/>
<rect x="5.8" y="119.3" width="8.8" height="7.6" fill="none" stroke="#dedede" stroke-width="0.9"/><path d="M 5.8 119.3 L 14.6 126.89999999999999 M 14.6 119.3 L 5.8 126.89999999999999" stroke="#dedede" stroke-width="0.7"/>
<path d="M 6 141.2 L 6.6 139.2 L 10.6 135.2 L 12 136.6 L 8 140.6 Z" fill="none" stroke="#dedede" stroke-width="0.8"/><path d="M 10.4 134.2 L 13 136.8 M 11.4 135.0 L 13.6 132.8" stroke="#dedede" stroke-width="1.8" stroke-linecap="round"/>
<path d="M 17.4 140.2 V 142.0 H 15.6 Z" fill="#c0c0c0"/>
<circle cx="10.2" cy="150.9" r="3.7" fill="#cdcdcd"/><path d="M 7.4 149.1 H 13 M 6.8 150.9 H 13.6 M 7.4 152.70000000000002 H 13 M 8.4 147.9 V 153.9 M 10.2 147.3 V 154.5 M 12 147.9 V 153.9" stroke="#6e6e6e" stroke-width="0.45"/>
<path d="M 17.4 154.1 V 155.9 H 15.6 Z" fill="#c0c0c0"/>
<path d="M 13.8 160.0 L 15.2 161.4 L 10.6 166.4 L 9 165.0 Z" fill="#dedede"/><path d="M 8.4 165.60000000000002 L 10 167.0 C 9.4 169.0, 6.8 169.60000000000002, 5.2 169.20000000000002 C 6.8 168.20000000000002, 6.6 166.60000000000002, 8.4 165.60000000000002 Z" fill="#dedede"/>
<path d="M 17.4 168.0 V 169.8 H 15.6 Z" fill="#c0c0c0"/>
<circle cx="10.3" cy="175.9" r="1.9" fill="#dedede"/><path d="M 9.5 177.10000000000002 H 11.1 L 11.5 179.10000000000002 H 14.3 V 181.10000000000002 H 6.3 V 179.10000000000002 H 9.1 Z" fill="#dedede"/><path d="M 6.3 182.50000000000003 H 14.3" stroke="#dedede" stroke-width="0.9"/>
<path d="M 17.4 181.9 V 183.70000000000002 H 15.6 Z" fill="#c0c0c0"/>
<path d="M 14 188.4 L 14.8 189.2 L 10.4 194.0 L 9.2 193.0 Z" fill="#dedede"/><path d="M 8.6 193.6 L 9.8 194.79999999999998 C 9 196.2, 7.4 196.6, 6.2 196.4 C 7.4 195.6, 7.6 194.4, 8.6 193.6 Z" fill="#dedede"/><path d="M 5.4 191.4 A 2.6 2.6 0 1 1 8.2 192.79999999999998" fill="none" stroke="#dedede" stroke-width="0.7"/><path d="M 4.6 190.2 l 0.6 2 l 1.6 -1.2 Z" fill="#dedede"/>
<path d="M 17.4 195.79999999999998 V 197.6 H 15.6 Z" fill="#c0c0c0"/>
<path d="M 6 207.9 L 11 202.9 L 14.6 205.9 L 10.6 209.9 H 7.6 Z" fill="none" stroke="#dedede" stroke-width="0.8"/><path d="M 8.6 205.3 L 11 202.9 L 14.6 205.9 L 12.2 208.3 Z" fill="#dedede"/><path d="M 6 210.7 H 14.6" stroke="#dedede" stroke-width="0.6"/>
<path d="M 17.4 209.7 V 211.5 H 15.6 Z" fill="#c0c0c0"/>
<linearGradient id="gr2" x1="0" x2="1" y1="0" y2="0"><stop offset="0" stop-color="#5e5e5e"/><stop offset="1" stop-color="#cfcfcf"/></linearGradient><rect x="5.6" y="216.8" width="9.2" height="7.2" fill="url(#gr2)" stroke="#dedede" stroke-width="0.8"/>
<path d="M 17.4 223.6 V 225.4 H 15.6 Z" fill="#c0c0c0"/>
<path d="M 8 230.3 C 10.6 229.3, 13.8 230.9, 13.6 233.70000000000002 C 12.6 235.10000000000002, 11 234.9, 10.2 234.70000000000002 L 8.2 238.70000000000002 L 6.8 238.10000000000002 L 8.4 233.9 C 7 233.3, 6.8 231.3, 8 230.3 Z" fill="#dedede"/>
<path d="M 17.4 237.5 V 239.3 H 15.6 Z" fill="#c0c0c0"/>
<path d="M 13.6 243.79999999999998 L 14.4 244.6 L 10.6 248.79999999999998 L 9.6 248.0 Z" fill="#dedede"/><circle cx="7.8" cy="250.2" r="2.1" fill="#dedede"/><circle cx="11.6" cy="250.79999999999998" r="1.7" fill="none" stroke="#dedede" stroke-width="0.7"/>
<path d="M 17.4 251.39999999999998 V 253.2 H 15.6 Z" fill="#c0c0c0"/>
<circle cx="11.4" cy="260.70000000000005" r="2.9" fill="#dedede"/><circle cx="11.4" cy="260.70000000000005" r="1.1" fill="#7a7a7a"/><path d="M 9.4 262.90000000000003 L 6.4 266.3" stroke="#dedede" stroke-width="1.1" stroke-linecap="round"/>
<path d="M 17.4 265.3 V 267.1 H 15.6 Z" fill="#c0c0c0"/>
<path d="M 11.8 271.6 L 14.6 274.2 L 12.6 277.4 L 7 279.4 L 6.4 278.8 L 8.6 273.4 Z" fill="none" stroke="#dedede" stroke-width="0.9" stroke-linejoin="round"/><circle cx="10.6" cy="275.6" r="0.9" fill="#dedede"/><path d="M 6.8 279.2 L 10.2 276.0" stroke="#dedede" stroke-width="0.6"/>
<path d="M 17.4 279.2 V 281.0 H 15.6 Z" fill="#c0c0c0"/>
<text x="6.5" y="293.1" font-family="'Liberation Serif',serif" font-size="10.4" font-weight="700" fill="#dedede">T</text>
<path d="M 17.4 293.1 V 294.90000000000003 H 15.6 Z" fill="#c0c0c0"/>
<path d="M 7.6 299.2 L 13.4 304.8 H 10.6 L 12 307.8 L 10.8 308.40000000000003 L 9.4 305.40000000000003 L 7.6 307.2 Z" fill="#dedede"/>
<path d="M 17.4 307.0 V 308.8 H 15.6 Z" fill="#c0c0c0"/>
<rect x="5.6" y="314.30000000000007" width="9.2" height="6.8" fill="#8c8c8c" stroke="#dedede" stroke-width="0.9"/>
<path d="M 17.4 320.90000000000003 V 322.70000000000005 H 15.6 Z" fill="#c0c0c0"/>
<path d="M 7.4 336.0 C 6.4 334.20000000000005, 5.2 332.8, 5 331.40000000000003 C 5.6 331.0, 6.6 331.6, 7.2 332.6 V 328.6 C 7.4 327.8, 8.4 327.8, 8.6 328.6 V 327.6 C 8.8 326.8, 9.8 326.8, 10 327.6 V 328.20000000000005 C 10.2 327.40000000000003, 11.2 327.40000000000003, 11.4 328.20000000000005 V 329.20000000000005 C 11.6 328.40000000000003, 12.6 328.40000000000003, 12.8 329.20000000000005 V 333.20000000000005 C 12.8 334.6, 12.2 335.40000000000003, 11.8 336.0 Z" fill="#dedede"/>
<path d="M 17.4 334.8 V 336.6 H 15.6 Z" fill="#c0c0c0"/>
<circle cx="9.2" cy="344.30000000000007" r="3.1" fill="none" stroke="#dedede" stroke-width="1"/><path d="M 11.6 346.70000000000005 L 14.4 349.50000000000006" stroke="#dedede" stroke-width="1.3" stroke-linecap="round"/>
<circle cx="7" cy="358.8" r="0.9" fill="#dedede"/><circle cx="10.2" cy="358.8" r="0.9" fill="#dedede"/><circle cx="13.4" cy="358.8" r="0.9" fill="#dedede"/>
<path d="M 17.4 362.6 V 364.40000000000003 H 15.6 Z" fill="#c0c0c0"/>
<rect x="3.8" y="370.4" width="3.4" height="3.2" fill="#e8e8e8" stroke="#3a3a3a" stroke-width="0.3"/><rect x="1.8" y="368.6" width="3.9" height="3.5" fill="#000" stroke="#bbb" stroke-width="0.3"/>
<path d="M 13.4 369.2 C 15.6 369, 16.4 370, 16.4 372.4" fill="none" stroke="#dedede" stroke-width="0.9"/><path d="M 12.2 369.3 l 1.9 -1.5 v 3 Z M 16.4 373.8 l -1.5 -1.9 h 3 Z" fill="#dedede"/>
<rect x="9" y="382.4" width="8.6" height="9.2" fill="#1d7cf2" stroke="#d8d8d8" stroke-width="0.5"/><path d="M 10 390.6 H 16.6" stroke="#dfe9ff" stroke-width="0.6" stroke-dasharray="0.8 0.6"/>
<rect x="2.8" y="377.2" width="9.2" height="9.8" fill="#f9f0e3" stroke="#555" stroke-width="0.5"/>
<rect x="5.6" y="398.6" width="9" height="7.2" rx="0.8" fill="none" stroke="#dedede" stroke-width="0.9"/><circle cx="10.1" cy="402.2" r="2" fill="none" stroke="#dedede" stroke-width="0.7" stroke-dasharray="0.9 0.6"/>
<rect x="7.8" y="412.2" width="7" height="5" fill="none" stroke="#dedede" stroke-width="0.8"/><rect x="5.2" y="414.4" width="7" height="5" fill="#535353" stroke="#dedede" stroke-width="0.8"/>
<path d="M 17.4 419 V 420.8 H 15.6 Z" fill="#c0c0c0"/>
<circle cx="9.4" cy="432" r="3" fill="none" stroke="#dedede" stroke-width="0.8"/><rect x="9.4" y="432.4" width="5" height="4" fill="#535353" stroke="#dedede" stroke-width="0.8"/><path d="M 10.6 435.2 l 1.2 -1.4 l 1 1 l 0.8 -0.6" fill="none" stroke="#dedede" stroke-width="0.5"/><circle cx="13.6" cy="428.8" r="1.5" fill="#2d8cff"/>
<text x="18.9" y="8.8" font-size="7" font-weight="400" fill="#dcdcdc" textLength="9.0" lengthAdjust="spacingAndGlyphs">File</text>
<text x="34.9" y="8.8" font-size="7" font-weight="400" fill="#dcdcdc" textLength="10.1" lengthAdjust="spacingAndGlyphs">Edit</text>
<text x="51.9" y="8.8" font-size="7" font-weight="400" fill="#dcdcdc" textLength="17.1" lengthAdjust="spacingAndGlyphs">Image</text>
<text x="75.9" y="8.8" font-size="7" font-weight="400" fill="#dcdcdc" textLength="14.5" lengthAdjust="spacingAndGlyphs">Layer</text>
<text x="97.2" y="8.8" font-size="7" font-weight="400" fill="#dcdcdc" textLength="12.8" lengthAdjust="spacingAndGlyphs">Type</text>
<text x="116.8" y="8.8" font-size="7" font-weight="400" fill="#dcdcdc" textLength="16.5" lengthAdjust="spacingAndGlyphs">Select</text>
<text x="140" y="8.8" font-size="7" font-weight="400" fill="#dcdcdc" textLength="13.8" lengthAdjust="spacingAndGlyphs">Filter</text>
<text x="160" y="8.8" font-size="7" font-weight="400" fill="#dcdcdc" textLength="13.6" lengthAdjust="spacingAndGlyphs">View</text>
<text x="180" y="8.8" font-size="7" font-weight="400" fill="#dcdcdc" textLength="20" lengthAdjust="spacingAndGlyphs">Plugins</text>
<text x="206.3" y="8.8" font-size="7" font-weight="400" fill="#dcdcdc" textLength="23.4" lengthAdjust="spacingAndGlyphs">Window</text>
<text x="236.5" y="8.8" font-size="7" font-weight="400" fill="#dcdcdc" textLength="13.0" lengthAdjust="spacingAndGlyphs">Help</text>
<rect x="3" y="1.8" width="8.4" height="8.2" rx="1.6" fill="#0b2136"/><text x="4.6" y="8" font-size="4.8" font-weight="700" fill="#3aa7f5" textLength="5.2" lengthAdjust="spacingAndGlyphs">Ps</text>
<path d="M 972.5 6.4 H 978" stroke="#d0d0d0" stroke-width="0.9"/>
<rect x="987" y="4" width="4.2" height="3.6" fill="none" stroke="#d0d0d0" stroke-width="0.7"/><path d="M 988.6 4 V 2.8 H 993 V 6.4 H 991.2" fill="none" stroke="#d0d0d0" stroke-width="0.7"/>
<path d="M 1007.2 3.2 L 1011.6 7 M 1011.6 3.2 L 1007.2 7" stroke="#e0e0e0" stroke-width="0.9"/>
<path d="M 967.6 0 V 11 M 982.2 0 V 11 M 996.8 0 V 11" stroke="#606060" stroke-width="0.5" stroke-dasharray="0.8 0.8"/>
<text x="66.7" y="24" font-size="5.8" font-weight="400" fill="#dcdcdc" textLength="27.9" lengthAdjust="spacingAndGlyphs">Auto-Select:</text>
<rect x="103" y="17" width="28.5" height="11" fill="#454545" rx="1"/>
<text x="107.6" y="25" font-size="5.8" font-weight="400" fill="#dcdcdc" textLength="12.6" lengthAdjust="spacingAndGlyphs">Layer</text>
<text x="149.1" y="24.2" font-size="5.8" font-weight="400" fill="#dcdcdc" textLength="59.7" lengthAdjust="spacingAndGlyphs">Show Transform Controls</text>
<path d="M 3.2 17 V 27" stroke="#3e3e3e" stroke-width="0.9" stroke-dasharray="0.8 0.8"/>
<path d="M 14.8 18.2 L 19.4 22.4 H 18 V 26.4 H 15.9 V 23.6 H 13.7 V 26.4 H 11.6 V 22.4 H 10.2 Z" fill="#f2f2f2"/>
<path d="M 28.2 16.4 V 27.6" stroke="#404040" stroke-width="0.8" stroke-dasharray="0.9 0.5"/><path d="M 29.0 16.4 V 27.6" stroke="#5c5c5c" stroke-width="0.4"/>
<path d="M 36.4 18.900000000000002 V 25.7 M 33 22.3 H 39.8" stroke="#dedede" stroke-width="0.8"/><path d="M 36.4 17.9 l 1.4 1.7 h -2.8 Z M 36.4 26.700000000000003 l 1.4 -1.7 h -2.8 Z M 32 22.3 l 1.7 -1.4 v 2.8 Z M 40.8 22.3 l -1.7 -1.4 v 2.8 Z" fill="#dedede"/>
<path d="M 46.4 22 L 48 23.6 L 49.6 22" fill="none" stroke="#9a9a9a" stroke-width="0.8"/>
<path d="M 54.4 16.4 V 27.6" stroke="#404040" stroke-width="0.8" stroke-dasharray="0.9 0.5"/><path d="M 55.199999999999996 16.4 V 27.6" stroke="#5c5c5c" stroke-width="0.4"/>
<rect x="59" y="19.6" width="4.8" height="4.8" rx="0.8" fill="none" stroke="#dedede" stroke-width="0.9"/><path d="M 60.2 21.8 L 61.2 23 L 62.8 20.8" fill="none" stroke="#dedede" stroke-width="0.8"/>
<path d="M 126.4 22.6 L 128 24.2 L 129.6 22.6" fill="none" stroke="#b8b8b8" stroke-width="0.8"/>
<path d="M 136.4 16.4 V 27.6" stroke="#404040" stroke-width="0.8" stroke-dasharray="0.9 0.5"/><path d="M 137.20000000000002 16.4 V 27.6" stroke="#5c5c5c" stroke-width="0.4"/>
<rect x="141.8" y="19.8" width="4.6" height="4.6" rx="0.7" fill="none" stroke="#b4b4b4" stroke-width="0.7"/>
<path d="M 217.6 16.4 V 27.6" stroke="#404040" stroke-width="0.8" stroke-dasharray="0.9 0.5"/><path d="M 218.4 16.4 V 27.6" stroke="#5c5c5c" stroke-width="0.4"/>
<path d="M 226.1 19.0 V 26.200000000000003" stroke="#a8a8a8" stroke-width="0.7"/><rect x="227.3" y="20.200000000000003" width="3.4" height="1.8" fill="#a8a8a8"/><rect x="227.3" y="23.200000000000003" width="5.6" height="1.8" fill="#a8a8a8"/>
<path d="M 243.5 18.8 V 26.400000000000002" stroke="#a8a8a8" stroke-width="0.7"/><rect x="241.7" y="20.200000000000003" width="3.6" height="1.8" fill="#a8a8a8"/><rect x="240.5" y="23.200000000000003" width="6" height="1.8" fill="#a8a8a8"/>
<path d="M 260.4 19.0 V 26.200000000000003" stroke="#a8a8a8" stroke-width="0.7"/><rect x="255.8" y="20.200000000000003" width="3.4" height="1.8" fill="#a8a8a8"/><rect x="253.6" y="23.200000000000003" width="5.6" height="1.8" fill="#a8a8a8"/>
<path d="M 271.2 19.400000000000002 H 279.2 M 271.2 25.8 H 279.2" stroke="#a8a8a8" stroke-width="0.7"/><rect x="272.4" y="21.6" width="5.6" height="2" fill="#a8a8a8"/>
<path d="M 286.4 16.4 V 27.6" stroke="#404040" stroke-width="0.8" stroke-dasharray="0.9 0.5"/><path d="M 287.2 16.4 V 27.6" stroke="#5c5c5c" stroke-width="0.4"/>
<path d="M 294.4 19.200000000000003 H 301.6" stroke="#a8a8a8" stroke-width="0.7"/><rect x="295.6" y="20.400000000000002" width="1.8" height="5.6" fill="#a8a8a8"/><rect x="298.6" y="20.400000000000002" width="1.8" height="3.4" fill="#a8a8a8"/>
<path d="M 308.2 22.6 H 315.8" stroke="#a8a8a8" stroke-width="0.7"/><rect x="309.6" y="19.6" width="1.8" height="6" fill="#a8a8a8"/><rect x="312.6" y="20.8" width="1.8" height="3.6" fill="#a8a8a8"/>
<path d="M 322.2 26.0 H 329.40000000000003" stroke="#a8a8a8" stroke-width="0.7"/><rect x="323.40000000000003" y="19.200000000000003" width="1.8" height="5.6" fill="#a8a8a8"/><rect x="326.40000000000003" y="21.400000000000002" width="1.8" height="3.4" fill="#a8a8a8"/>
<path d="M 341 18.6 V 26.6 M 347 18.6 V 26.6" stroke="#a8a8a8" stroke-width="0.7"/><rect x="343" y="19.8" width="2" height="5.6" fill="#a8a8a8"/>
<path d="M 355.4 16.4 V 27.6" stroke="#404040" stroke-width="0.8" stroke-dasharray="0.9 0.5"/><path d="M 356.2 16.4 V 27.6" stroke="#5c5c5c" stroke-width="0.4"/>
<circle cx="363.6" cy="22" r="0.95" fill="#dedede"/><circle cx="367" cy="22" r="0.95" fill="#dedede"/><circle cx="370.4" cy="22" r="0.95" fill="#dedede"/>
<path d="M 378.2 16.4 V 27.6" stroke="#404040" stroke-width="0.8" stroke-dasharray="0.9 0.5"/><path d="M 379.0 16.4 V 27.6" stroke="#5c5c5c" stroke-width="0.4"/>
<path d="M 393.39 22.51 L 393.20 23.44 L 392.08 23.56 L 391.68 24.15 L 392.00 25.24 L 391.21 25.77 L 390.33 25.05 L 389.63 25.19 L 389.09 26.19 L 388.16 26.00 L 388.04 24.88 L 387.45 24.48 L 386.36 24.80 L 385.83 24.01 L 386.55 23.13 L 386.41 22.43 L 385.41 21.89 L 385.60 20.96 L 386.72 20.84 L 387.12 20.25 L 386.80 19.16 L 387.59 18.63 L 388.47 19.35 L 389.17 19.21 L 389.71 18.21 L 390.64 18.40 L 390.76 19.52 L 391.35 19.92 L 392.44 19.60 L 392.97 20.39 L 392.25 21.27 L 392.39 21.97 Z" fill="#dedede"/><circle cx="389.4" cy="22.2" r="1.5" fill="#535353"/><rect x="392.6" y="25.4" width="1.6" height="0.8" fill="#dedede"/>
<rect x="916" y="15.4" width="28.8" height="13" rx="6.5" fill="#1a73e8"/><text x="924.2" y="24" font-size="5.6" fill="#fff" textLength="12.8" lengthAdjust="spacingAndGlyphs">Share</text>
<path d="M 956.8 17.4 C 959.2 17.4, 959.8 19.6, 959.8 21.6 C 959.8 23.2, 960.6 24, 961 24.6 H 952.6 C 953 24, 953.8 23.2, 953.8 21.6 C 953.8 19.6, 954.4 17.4, 956.8 17.4 Z" fill="#dedede"/><path d="M 955.8 25.6 A 1 1 0 0 0 957.8 25.6 Z" fill="#dedede"/>
<circle cx="973.6" cy="21.8" r="2.9" fill="none" stroke="#dedede" stroke-width="0.9"/><path d="M 975.8 24 L 978 26.2" stroke="#dedede" stroke-width="1.1" stroke-linecap="round"/>
<path d="M 991.6 19 A 2.6 2.6 0 0 1 993 23.8 V 25 H 990.2 V 23.8 A 2.6 2.6 0 0 1 991.6 19 Z" fill="none" stroke="#dedede" stroke-width="0.8"/><path d="M 990.4 26.2 H 992.8 M 991.6 16.6 V 17.6 M 987.6 21.4 H 988.6 M 994.6 21.4 H 995.6 M 988.6 18.2 L 989.4 19 M 994.6 18.2 L 993.8 19" stroke="#dedede" stroke-width="0.7"/>
<rect x="1003.2" y="19" width="8.6" height="6.6" fill="none" stroke="#dedede" stroke-width="0.9"/><rect x="1003.2" y="19" width="2.6" height="6.6" fill="#dedede"/>
<path d="M 1017.2 21.6 L 1018.8 23.2 L 1020.4 21.6" fill="none" stroke="#c4c4c4" stroke-width="0.8"/>
<path d="M 126 37.4 L 128.6 40 M 128.6 37.4 L 126 40" stroke="#bdbdbd" stroke-width="0.7"/>
<path d="M 141 548.4 L 142.8 550.4 L 141 552.4" fill="none" stroke="#c8c8c8" stroke-width="0.7"/>
<text x="27.7" y="41.2" font-size="6.2" font-weight="700" fill="#e8e8e8" textLength="93.8" lengthAdjust="spacingAndGlyphs">Untitled-1 @ 66.7% (W, RGB/8#) *</text>
<text x="24.5" y="553" font-size="7" font-weight="400" fill="#e6e6e6" textLength="23.0" lengthAdjust="spacingAndGlyphs">66.67%</text>
<text x="71.7" y="552.6" font-size="5.4" font-weight="400" fill="#cfcfcf" textLength="42.9" lengthAdjust="spacingAndGlyphs">Doc: 3.00M/1.00M</text>
<rect x="721.6" y="32.2" width="302.4" height="521.8" fill="#464646" />
<rect x="721.6" y="32.2" width="302.4" height="5.4" fill="#424242" />
<rect x="722.8" y="38" width="19.4" height="36" fill="#535353" />
<line x1="728.5" y1="40" x2="736.5" y2="40" stroke="#6a6a6a" stroke-width="1" stroke-dasharray="0.8 0.8"/>
<rect x="722.8" y="75.5" width="19.4" height="35.5" fill="#535353" />
<line x1="728.5" y1="77.5" x2="736.5" y2="77.5" stroke="#6a6a6a" stroke-width="1" stroke-dasharray="0.8 0.8"/>
<rect x="722.8" y="112.3" width="19.4" height="20.2" fill="#535353" />
<line x1="728.5" y1="114.3" x2="736.5" y2="114.3" stroke="#6a6a6a" stroke-width="1" stroke-dasharray="0.8 0.8"/>
<rect x="722.8" y="133.8" width="19.4" height="20.4" fill="#535353" />
<line x1="728.5" y1="135.8" x2="736.5" y2="135.8" stroke="#6a6a6a" stroke-width="1" stroke-dasharray="0.8 0.8"/>
<rect x="722.8" y="155.5" width="19.4" height="21.1" fill="#535353" />
<line x1="728.5" y1="157.5" x2="736.5" y2="157.5" stroke="#6a6a6a" stroke-width="1" stroke-dasharray="0.8 0.8"/>
<rect x="722.8" y="177.9" width="19.4" height="376.1" fill="#535353" />
<rect x="743.6" y="38" width="59.0" height="36" fill="#535353" />
<line x1="769.1" y1="40" x2="777.1" y2="40" stroke="#6a6a6a" stroke-width="1" stroke-dasharray="0.8 0.8"/>
<rect x="743.6" y="75.5" width="59.0" height="20.5" fill="#535353" />
<line x1="769.1" y1="77.5" x2="777.1" y2="77.5" stroke="#6a6a6a" stroke-width="1" stroke-dasharray="0.8 0.8"/>
<rect x="743.6" y="97.3" width="59.0" height="456.7" fill="#535353" />
<rect x="804.1" y="38" width="19.9" height="20.8" fill="#535353" />
<line x1="810.05" y1="40" x2="818.05" y2="40" stroke="#6a6a6a" stroke-width="1" stroke-dasharray="0.8 0.8"/>
<rect x="804.1" y="60.099999999999994" width="19.9" height="493.9" fill="#535353" />
<rect x="825.5" y="38" width="19.9" height="36" fill="#535353" />
<line x1="831.45" y1="40" x2="839.45" y2="40" stroke="#6a6a6a" stroke-width="1" stroke-dasharray="0.8 0.8"/>
<rect x="825.5" y="75.3" width="19.9" height="478.7" fill="#535353" />
<rect x="846.8" y="38" width="49.5" height="20.8" fill="#535353" />
<line x1="867.55" y1="40" x2="875.55" y2="40" stroke="#6a6a6a" stroke-width="1" stroke-dasharray="0.8 0.8"/>
<rect x="846.8" y="60.2" width="49.5" height="20.7" fill="#535353" />
<line x1="867.55" y1="62.2" x2="875.55" y2="62.2" stroke="#6a6a6a" stroke-width="1" stroke-dasharray="0.8 0.8"/>
<rect x="846.8" y="82.2" width="49.5" height="20.8" fill="#535353" />
<line x1="867.55" y1="84.2" x2="875.55" y2="84.2" stroke="#6a6a6a" stroke-width="1" stroke-dasharray="0.8 0.8"/>
<rect x="846.8" y="104.3" width="49.5" height="449.7" fill="#535353" />
<path d="M 736.8 33.5 L 735.2 34.8 L 736.8 36.099999999999994" fill="none" stroke="#bdbdbd" stroke-width="0.7"/><path d="M 738.9 33.5 L 737.3000000000001 34.8 L 738.9 36.099999999999994" fill="none" stroke="#bdbdbd" stroke-width="0.7"/>
<path d="M 797.3 33.5 L 795.7 34.8 L 797.3 36.099999999999994" fill="none" stroke="#bdbdbd" stroke-width="0.7"/><path d="M 799.4 33.5 L 797.8000000000001 34.8 L 799.4 36.099999999999994" fill="none" stroke="#bdbdbd" stroke-width="0.7"/>
<path d="M 818.5 33.5 L 816.9000000000001 34.8 L 818.5 36.099999999999994" fill="none" stroke="#bdbdbd" stroke-width="0.7"/><path d="M 820.6 33.5 L 819.0000000000001 34.8 L 820.6 36.099999999999994" fill="none" stroke="#bdbdbd" stroke-width="0.7"/>
<path d="M 839.8 33.5 L 838.2 34.8 L 839.8 36.099999999999994" fill="none" stroke="#bdbdbd" stroke-width="0.7"/><path d="M 841.9 33.5 L 840.3000000000001 34.8 L 841.9 36.099999999999994" fill="none" stroke="#bdbdbd" stroke-width="0.7"/>
<path d="M 891.1999999999999 33.5 L 889.6 34.8 L 891.1999999999999 36.099999999999994" fill="none" stroke="#bdbdbd" stroke-width="0.7"/><path d="M 893.3 33.5 L 891.7 34.8 L 893.3 36.099999999999994" fill="none" stroke="#bdbdbd" stroke-width="0.7"/>
<path d="M 1014.9000000000001 33.5 L 1016.5 34.8 L 1014.9000000000001 36.099999999999994" fill="none" stroke="#bdbdbd" stroke-width="0.7"/><path d="M 1017.0000000000001 33.5 L 1018.6 34.8 L 1017.0000000000001 36.099999999999994" fill="none" stroke="#bdbdbd" stroke-width="0.7"/>
<g fill="#dadada"><rect x="729" y="45.6" width="2.4" height="2.2"/><rect x="729" y="48.5" width="2.4" height="2.2" fill="none" stroke="#dadada" stroke-width="0.5"/><rect x="729" y="51.6" width="2.4" height="2.4"/></g>
<path d="M 733.6 47.2 L 736 47.2 M 733.6 47.2 L 733.6 45.4 M 733.8 47 C 737.5 46.6, 738.6 50.5, 735 53.6" fill="none" stroke="#dadada" stroke-width="0.9"/>
<path d="M 729.6 61.6 L 737.6 65.1 L 729.6 68.6 Z" fill="#dadada" stroke="#dadada" stroke-width="1" stroke-linejoin="round"/><path d="M 731 63.6 L 734.4 65.1 L 731 66.6 Z" fill="none" stroke="#8a8a8a" stroke-width="0.5"/>
<path d="M 737.8 81.8 L 738.6 82.8 L 733.2 88.6 L 731.6 87.2 Z" fill="#dadada"/><path d="M 731 87.8 L 732.6 89.2 C 731.6 91, 729.4 91.4, 728.2 91 C 729.6 90.2, 729.6 88.6, 731 87.8 Z" fill="#dadada"/>
<g fill="#dadada"><rect x="726.8" y="82" width="1" height="1"/><rect x="728.6" y="82" width="1.6" height="1"/><rect x="726.8" y="84" width="1" height="1"/><rect x="728.6" y="84" width="1.6" height="1"/><rect x="726.8" y="86" width="1" height="1"/></g>
<path d="M 727.6 98.6 L 737.8 98.6 M 727.6 104.2 L 737.8 104.2" stroke="#dadada" stroke-width="0.9"/><path d="M 727.4 98.6 L 731 96.8 L 731 100.4 Z M 737.6 102 L 737.6 106.4 L 733.6 104.2 Z" fill="#dadada"/><rect x="731" y="97.6" width="1.6" height="2" fill="#dadada"/>
<text x="728.6" y="127.4" font-family="'Liberation Serif',serif" font-style="italic" font-weight="700" font-size="11" fill="#dadada">A</text><path d="M 728.6 119.6 C 729.6 118.4, 731.6 118.8, 732.4 120" fill="none" stroke="#dadada" stroke-width="0.8"/>
<ellipse cx="732.2" cy="145.2" rx="5" ry="2.6" transform="rotate(-14 732.2 145.2)" fill="#9d9d9d"/><path d="M 727 146.8 L 729.4 148.4 L 730 146.2 Z" fill="#9d9d9d"/>
<rect x="728.6" y="163.4" width="9" height="7.8" fill="#e2e2e2"/><path d="M 730 163.4 V 171.2 M 731.6 163.4 V 171.2 M 733 163.4 V 171.2" stroke="#6a6a6a" stroke-width="0.7"/><path d="M 728.6 165.4 h 1 M 728.6 167.4 h 1 M 728.6 169.4 h 1" stroke="#6a6a6a" stroke-width="0.5"/>
<ellipse cx="754" cy="50.2" rx="4.8" ry="3.4" fill="none" stroke="#dadada" stroke-width="0.9"/><path d="M 754.6 46.6 L 756.2 46.2 L 755.4 51 L 753.8 51 Z" fill="#dadada"/><circle cx="751.4" cy="50.2" r="0.8" fill="#dadada"/><circle cx="756.9" cy="51.2" r="0.7" fill="#dadada"/><circle cx="753" cy="52.2" r="0.6" fill="#dadada"/>
<path d="M 749.4 61.2 H 758.4 V 69.2 H 749.4 Z M 749.4 63.6 H 758.4 M 749.4 66.4 H 758.4 M 752.4 61.2 V 69.2 M 755.4 61.2 V 69.2" fill="none" stroke="#dadada" stroke-width="0.7"/><rect x="749.4" y="61.2" width="9" height="2.2" fill="#dadada" opacity="0.55"/>
<circle cx="754" cy="86.6" r="4.2" fill="none" stroke="#dadada" stroke-width="0.9"/><path d="M 757 83.6 A 4.2 4.2 0 0 1 751 89.6 Z" fill="#dadada"/>
<path d="M 809.6 45.8 H 813 L 814 47 H 819.4 V 54 H 809.6 Z" fill="none" stroke="#bcbcbc" stroke-width="0.7"/><path d="M 811.4 49.2 H 812.6 V 48.4 H 813.8 V 49.2 H 815.2 V 48.4 H 816.4 V 49.2 H 817.6 V 52.6 H 811.4 Z" fill="#bcbcbc"/>
<text x="831.2" y="53.4" font-size="10.5" fill="#dadada">A</text><path d="M 839.6 45 V 54" stroke="#dadada" stroke-width="0.7"/>
<text x="832.2" y="68.2" font-size="10" font-weight="700" fill="#dadada">¶</text>
<path d="M 854.2 49.4 h 2.7 v 3.6 h -2.7 Z M 857.4 49.4 h 2.7 v 3.6 h -2.7 Z M 854.9 47.8 h 1.3 v 1.6 h -1.3 Z M 858.1 47.8 h 1.3 v 1.6 h -1.3 Z" fill="#dadada"/>
<path d="M 855 66.8 H 861 V 75.4 H 854.4 C 853.2 75.4, 852.8 74.6, 852.8 73.6 V 68.6 C 852.8 67.4, 853.6 66.8, 855 66.8 Z" fill="none" stroke="#dadada" stroke-width="0.8"/><path d="M 857 66.8 V 70.6 L 858.2 69.6 L 859.4 70.6 V 66.8 Z" fill="#dadada"/>
<path d="M 857.2 88.4 A 5.2 5.2 0 1 0 862.4 93.6 V 88.4 Z" fill="none" stroke="#dadada" stroke-width="0.8" transform="rotate(90 857.2 93.6)"/><text x="854.2" y="95.6" font-size="5.4" font-weight="700" fill="#dadada">cr</text>
<text x="763.8" y="52.2" font-size="6.2" font-weight="700" fill="#ededed" textLength="13.2" lengthAdjust="spacingAndGlyphs" >Color</text>
<text x="763.8" y="67.3" font-size="6.2" font-weight="700" fill="#ededed" textLength="23.2" lengthAdjust="spacingAndGlyphs" >Swatches</text>
<text x="763.8" y="89.4" font-size="6.2" font-weight="700" fill="#ededed" textLength="28.7" lengthAdjust="spacingAndGlyphs" >Adjustme...</text>
<text x="866.7" y="52.2" font-size="6.2" font-weight="700" fill="#ededed" textLength="18.3" lengthAdjust="spacingAndGlyphs" >Plugins</text>
<text x="866.7" y="74.3" font-size="6.2" font-weight="700" fill="#ededed" textLength="21.3" lengthAdjust="spacingAndGlyphs" >Libraries</text>
<text x="866.7" y="96" font-size="6.2" font-weight="700" fill="#ededed" textLength="19.6" lengthAdjust="spacingAndGlyphs" >Conte...</text>
<rect x="897.8" y="38" width="126.2" height="14.4" fill="#424242" />
<rect x="897.8" y="38" width="25.2" height="14.6" fill="#535353" />
<rect x="923" y="38" width="0.6" height="14.4" fill="#3b3b3b" />
<rect x="954.4" y="38" width="0.6" height="14.4" fill="#3b3b3b" />
<rect x="978" y="38" width="0.6" height="14.4" fill="#3b3b3b" />
<rect x="897.8" y="52.4" width="126.2" height="501.6" fill="#535353" />
<text x="902.7" y="46.8" font-size="6.2" font-weight="700" fill="#f0f0f0" textLength="16.3" lengthAdjust="spacingAndGlyphs" >Layers</text>
<text x="927.7" y="46.8" font-size="6.2" font-weight="400" fill="#bdbdbd" textLength="23.1" lengthAdjust="spacingAndGlyphs" >Channels</text>
<text x="960" y="46.8" font-size="6.2" font-weight="400" fill="#bdbdbd" textLength="13.4" lengthAdjust="spacingAndGlyphs" >Paths</text>
<path d="M 1015 43.4 H 1021 M 1015 45 H 1021 M 1015 46.6 H 1021" stroke="#c8c8c8" stroke-width="0.8"/>
<rect x="900.6" y="57.8" width="45.1" height="9.0" fill="#3f3f3f" rx="1"/>
<circle cx="906.2" cy="62.2" r="1.9" fill="none" stroke="#dadada" stroke-width="0.9"/><path d="M 907.6 63.8 L 909.4 65.8" stroke="#dadada" stroke-width="1"/>
<text x="912.1" y="64.9" font-size="6.2" font-weight="400" fill="#e4e4e4" textLength="10.6" lengthAdjust="spacingAndGlyphs" >Kind</text>
<path d="M 941.1 62.25 L 942.6 63.75 L 944.1 62.25" fill="none" stroke="#c4c4c4" stroke-width="0.8"/>
<rect x="952.4" y="59.4" width="6.6" height="5.6" fill="none" stroke="#dadada" stroke-width="0.8"/><path d="M 953.4 64 L 955 61.6 L 956.2 63 L 957 62.2 L 958.2 64 Z" fill="#dadada"/>
<circle cx="968.7" cy="62.4" r="2.9" fill="none" stroke="#dadada" stroke-width="0.8"/><path d="M 970.8 60.4 A 2.9 2.9 0 0 1 966.6 64.4 Z" fill="#dadada"/>
<text x="978.8" y="65.2" font-family="'Liberation Serif',serif" font-weight="700" font-size="8.4" fill="#dadada">T</text>
<rect x="991.4" y="59.8" width="5.4" height="5.4" fill="none" stroke="#dadada" stroke-width="0.8"/><g fill="#dadada"><rect x="990.4" y="58.8" width="1.8" height="1.8"/><rect x="996" y="58.8" width="1.8" height="1.8"/><rect x="990.4" y="64.4" width="1.8" height="1.8"/><rect x="996" y="64.4" width="1.8" height="1.8"/></g>
<path d="M 1005 59 H 1008 L 1010 61 V 66 H 1005 Z" fill="none" stroke="#dadada" stroke-width="0.8"/><rect x="1004.4" y="62.6" width="3.2" height="3.2" fill="#dadada"/>
<rect x="1017.2" y="57.6" width="3.6" height="8.4" rx="1.8" fill="#3c3c3c"/><circle cx="1019" cy="59.4" r="1.9" fill="#e8e8e8"/>
<path d="M 898 69.3 H 1024 M 898 84.6 H 1024" stroke="#484848" stroke-width="0.6" stroke-dasharray="1 1"/>
<rect x="902.2" y="72.8" width="65.8" height="10.5" fill="#3f3f3f" rx="1"/>
<text x="904.6" y="80.2" font-size="6.2" font-weight="400" fill="#e6e6e6" textLength="19.4" lengthAdjust="spacingAndGlyphs" >Dissolve</text>
<path d="M 963.3 77.65 L 964.8 79.15 L 966.3 77.65" fill="none" stroke="#c4c4c4" stroke-width="0.8"/>
<text x="973.2" y="80.2" font-size="6.2" font-weight="400" fill="#cfcfcf" textLength="16.9" lengthAdjust="spacingAndGlyphs" >Opacity:</text>
<rect x="994.4" y="73" width="17.8" height="10.2" fill="#3f3f3f" rx="1"/>
<text x="996.7" y="80.2" font-size="6.2" font-weight="400" fill="#e6e6e6" textLength="13.3" lengthAdjust="spacingAndGlyphs" >100%</text>
<rect x="1013.4" y="73" width="8.2" height="10.2" fill="#484848" rx="1"/>
<path d="M 1015.9 77.45 L 1017.4 78.95 L 1018.9 77.45" fill="none" stroke="#c4c4c4" stroke-width="0.8"/>
<rect x="899.95" y="69.45" width="71.5" height="18.5" fill="none" stroke="#e61f26" stroke-width="3"/>
<text x="901" y="94.7" font-size="6.2" font-weight="400" fill="#cfcfcf" textLength="12" lengthAdjust="spacingAndGlyphs" >Lock:</text>
<rect x="919" y="89.6" width="5.2" height="5.2" fill="none" stroke="#dadada" stroke-width="0.6" stroke-dasharray="1 0.8"/><path d="M 919 89.6 h2.6 v2.6 h-2.6 Z M 921.6 92.2 h2.6 v2.6 h-2.6 Z" fill="#dadada" opacity="0.6"/>
<path d="M 936.4 89 L 937.2 89.8 L 932.6 94.6 L 931.4 93.6 Z" fill="#dadada"/><path d="M 931.2 94 L 932.4 95 C 931.6 96, 930.6 96.2, 929.8 96 C 930.6 95.4, 930.6 94.6, 931.2 94 Z" fill="#dadada"/>
<path d="M 945 90 V 95.4 M 942.3 92.7 H 947.7" stroke="#dadada" stroke-width="0.7"/><path d="M 945 89.2 l 1.2 1.4 h -2.4 Z M 945 96.2 l 1.2 -1.4 h -2.4 Z M 941.5 92.7 l 1.4 -1.2 v 2.4 Z M 948.5 92.7 l -1.4 -1.2 v 2.4 Z" fill="#dadada"/>
<path d="M 953.6 90.6 H 960.8 M 953.6 95.4 H 960.8 M 955 89.4 V 96.6 M 959.4 92 V 96.6" fill="none" stroke="#dadada" stroke-width="0.7"/><path d="M 957.6 89.2 H 960.6 V 92.2 Z" fill="#dadada"/>
<rect x="966.3" y="92" width="5.6" height="3.8" fill="#dadada"/><path d="M 967.6 92 V 91.2 A 1.5 1.5 0 0 1 970.6 91.2 V 92" fill="none" stroke="#dadada" stroke-width="0.9"/><rect x="968.6" y="93" width="1" height="1.6" fill="#535353"/>
<text x="984" y="94.7" font-size="6.2" font-weight="400" fill="#cfcfcf" textLength="6.6" lengthAdjust="spacingAndGlyphs" >Fill:</text>
<rect x="994.4" y="87.6" width="17.8" height="10.0" fill="#3f3f3f" rx="1"/>
<text x="996.7" y="94.7" font-size="6.2" font-weight="400" fill="#e6e6e6" textLength="13.3" lengthAdjust="spacingAndGlyphs" >100%</text>
<rect x="1013.4" y="87.6" width="8.2" height="10.0" fill="#484848" rx="1"/>
<path d="M 1015.9 92.05 L 1017.4 93.55 L 1018.9 92.05" fill="none" stroke="#c4c4c4" stroke-width="0.8"/>
<rect x="897.8" y="100.2" width="126.2" height="441.3" fill="#4e4e4e" />
<rect x="897.8" y="100.2" width="117.2" height="73.8" fill="#535353" />
<rect x="914.6" y="100.6" width="100.4" height="21.9" fill="#6a6a6a" />
<rect x="914" y="100.2" width="0.6" height="73.8" fill="#484848" />
<rect x="897.8" y="152" width="117.2" height="0.6" fill="#454545" />
<rect x="897.8" y="173.8" width="117.2" height="0.6" fill="#5c5c5c" />
<rect x="897.8" y="100.2" width="117.2" height="0.5" fill="#454545" />
<path d="M 902.6999999999999 112.2 Q 906.4 107.60000000000001 910.1 112.2 Q 906.4 116.8 902.6999999999999 112.2 Z" fill="none" stroke="#e8e8e8" stroke-width="0.80"/><circle cx="906.4" cy="112.2" r="1.15" fill="#e8e8e8"/>
<pattern id="chk" x="916.7" y="103.4" width="3.2" height="3.2" patternUnits="userSpaceOnUse"><rect width="3.2" height="3.2" fill="#fdfaf4"/><rect width="1.6" height="1.6" fill="#cfccc6"/><rect x="1.6" y="1.6" width="1.6" height="1.6" fill="#cfccc6"/></pattern>
<rect x="915.4" y="102.1" width="19" height="18.8" rx="1" fill="#4c4c4c" stroke="#c9c9c9" stroke-width="1"/><rect x="916.7" y="103.4" width="16.4" height="16.2" fill="url(#chk)"/>
<text x="921.8" y="113.8" font-family="'Liberation Serif',serif" font-weight="700" font-style="italic" font-size="7.4" fill="#000" stroke="#000" stroke-width="0.6">B</text>
<rect x="925.8" y="112.6" width="7.3" height="7" fill="#ededed" stroke="#3a3a3a" stroke-width="0.6"/><path d="M 927.6 114.6 h 3.6 v 3.4 h -3.6 Z M 928.8 115.6 v 1.6 M 930 115.6 v 1.6" fill="none" stroke="#444" stroke-width="0.5"/>
<text x="938.2" y="114" font-size="6.4" font-weight="400" fill="#f0f0f0" textLength="5.0" lengthAdjust="spacingAndGlyphs" >W</text>
<circle cx="1002.8" cy="112.8" r="2.1" fill="none" stroke="#a8a8a8" stroke-width="0.7"/><circle cx="1005" cy="111.4" r="2.1" fill="none" stroke="#a8a8a8" stroke-width="0.7"/>
<path d="M 1011 112.8 L 1012.6 111.2 L 1014.2 112.8" fill="none" stroke="#d0d0d0" stroke-width="0.8"/>
<path d="M 924.67 133 Q 928 128.86 931.33 133 Q 928 137.14 924.67 133 Z" fill="none" stroke="#e8e8e8" stroke-width="0.72"/><circle cx="928" cy="133" r="1.03" fill="#e8e8e8"/>
<rect x="933.6" y="125" width="16.6" height="16.2" fill="#ffffff" />
<text x="955.9" y="134.2" font-size="6.2" font-weight="400" fill="#e0e0e0" textLength="28.8" lengthAdjust="spacingAndGlyphs" >Smart Filters</text>
<path d="M 934.04 148.2 Q 937 144.51999999999998 939.96 148.2 Q 937 151.88 934.04 148.2 Z" fill="none" stroke="#e8e8e8" stroke-width="0.64"/><circle cx="937" cy="148.2" r="0.92" fill="#e8e8e8"/>
<text x="943.2" y="148.8" font-size="6.2" font-weight="400" fill="#e0e0e0" textLength="27.6" lengthAdjust="spacingAndGlyphs" >Blur Gallery</text>
<path d="M 902.3 164.5 Q 906 159.9 909.7 164.5 Q 906 169.1 902.3 164.5 Z" fill="none" stroke="#e8e8e8" stroke-width="0.80"/><circle cx="906" cy="164.5" r="1.15" fill="#e8e8e8"/>
<rect x="917" y="156" width="16" height="16" fill="#f9f0e3" />
<text x="938.4" y="165.9" font-size="6.2" font-weight="400" fill="#e6e6e6" font-style="italic" textLength="28.5" lengthAdjust="spacingAndGlyphs" >Background</text>
<rect x="1001.8" y="164.2" width="4.6" height="4" fill="none" stroke="#cfcfcf" stroke-width="0.7"/><path d="M 1002.8 164.2 V 163 A 1.3 1.3 0 0 1 1005.4 163 V 164.2" fill="none" stroke="#cfcfcf" stroke-width="0.7"/><rect x="1003.7" y="165.6" width="0.8" height="1.4" fill="#cfcfcf"/>
<rect x="897.8" y="541.5" width="126.2" height="12.5" fill="#535353" />
<rect x="897.8" y="541.2" width="126.2" height="0.6" fill="#484848" />
<rect x="916.2" y="546.5" width="3.4" height="2.6" rx="1.3" fill="none" stroke="#8a8a8a" stroke-width="0.7"/><rect x="919.4" y="546.5" width="3.4" height="2.6" rx="1.3" fill="none" stroke="#8a8a8a" stroke-width="0.7"/>
<text x="930.8" y="550.1999999999999" font-family="'Liberation Serif',serif" font-style="italic" font-size="8" fill="#dadada">fx</text><rect x="937.2" y="550.4" width="1" height="1" fill="#dadada"/>
<rect x="944.6" y="545.1999999999999" width="7.2" height="5.4" fill="#dadada"/><circle cx="948.2" cy="547.9" r="1.6" fill="#535353"/>
<circle cx="962.6" cy="547.8" r="2.7" fill="none" stroke="#dadada" stroke-width="0.8"/><path d="M 964.5 545.9 A 2.7 2.7 0 0 1 960.7 549.6999999999999 Z" fill="#dadada"/><rect x="965.6" y="550.4" width="1" height="1" fill="#dadada"/>
<path d="M 973.6 545.0 H 976.4 L 977.2 546.0 H 980.6 V 550.4 H 973.6 Z" fill="#dadada"/>
<rect x="988.8" y="545.0" width="6" height="6" rx="0.6" fill="none" stroke="#dadada" stroke-width="0.8"/><path d="M 991.8 546.5999999999999 V 549.4 M 990.4 548.0 H 993.2" stroke="#dadada" stroke-width="0.8"/>
<path d="M 1003 546.0 H 1007.4 L 1007 550.8 H 1003.4 Z" fill="#b5b5b5"/><path d="M 1002.4 545.4 H 1008 M 1004.4 544.5999999999999 H 1006" stroke="#b5b5b5" stroke-width="0.8"/>
</svg>
</body></html>
